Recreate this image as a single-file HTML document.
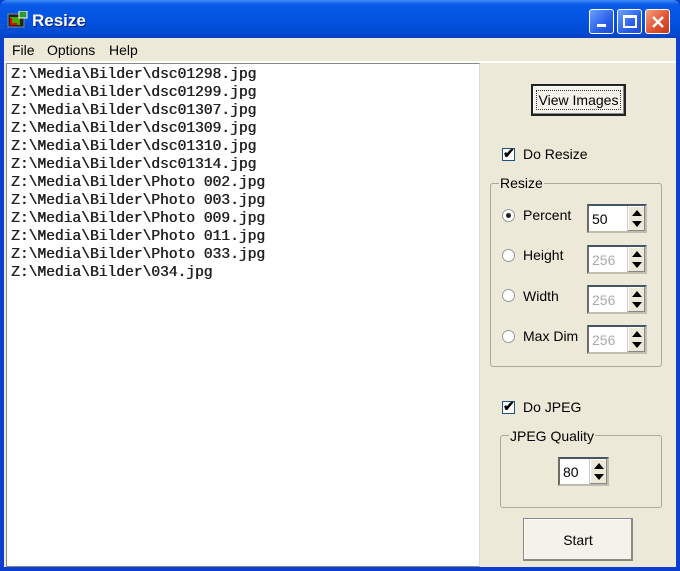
<!DOCTYPE html>
<html><head><style>
*{box-sizing:border-box;margin:0;padding:0}
body{width:680px;height:571px;overflow:hidden;background:#0a3fd0;font-family:"Liberation Sans",sans-serif;font-size:13px;position:relative}
.abs{position:absolute}
.title{left:0;top:0;width:680px;height:38px;background:linear-gradient(#3d8cf5 0,#0a5ae8 12%,#0354e3 50%,#0249d0 90%,#0a3fb8 100%);border-radius:7px 7px 0 0}
.ttext{left:32px;top:11px;color:#fff;font-weight:bold;font-size:17px;text-shadow:1px 1px #0a1f7a}
.tb{top:9px;width:25px;height:25px;border:1px solid #fff;border-radius:3px;background:linear-gradient(135deg,#6aa0ff,#2a60e8 60%,#1e4cd0)}
.client{left:4px;top:38px;width:672px;height:529px;background:#ece9d8}
.chk{width:13px;height:13px;border:1px solid #1c5180;background:#fff;}
.spin{background:#fff;border:2px inset #c0bdb0;border-top-color:#7f9db9}
.btn{background:#f4f2ea;border:1px solid #555;text-align:center;box-shadow:inset -1px -1px #888,inset 1px 1px #fff}
.grp{border:1px solid #aca899;border-radius:3px}
.lab{background:#ece9d8;padding:0 1px}
.radio{width:13px;height:13px;border-radius:50%;background:#fff;border:1px solid #999;}
.arr{width:18px;background:#ece9d8;border-left:1px solid #ccc;box-shadow:inset -1px -1px #888,inset 1px 1px #fff}
</style></head><body>
<div class="abs title"></div>
<svg class="abs" style="left:7px;top:11px" width="22" height="18"><rect x="1" y="3" width="16" height="13" fill="#222" stroke="#888"/><rect x="3" y="6" width="10" height="8" fill="#4a0"/><path d="M4 7v6h6" stroke="#e00" stroke-width="2" fill="none"/><rect x="12" y="0" width="8" height="7" fill="#2c9a2c" stroke="#fff"/></svg>
<div class="abs ttext">Resize</div>
<div class="abs tb" style="left:589px"><div class="abs" style="left:7px;top:14px;width:9px;height:3px;background:#fff"></div></div>
<div class="abs tb" style="left:617px"><div class="abs" style="left:5px;top:5px;width:14px;height:13px;border:2px solid #fff;border-top-width:3px"></div></div>
<div class="abs tb" style="left:645px;background:linear-gradient(135deg,#f0a080,#e05030 60%,#c03818)"><svg class="abs" style="left:5px;top:5px" width="14" height="14"><path d="M2 2L12 12M12 2L2 12" stroke="#fff" stroke-width="2.5"/></svg></div>
<div class="abs client"></div>
<div class="abs" style="left:12px;top:42px;font-size:14px">File</div>
<div class="abs" style="left:47px;top:42px;font-size:14px">Options</div>
<div class="abs" style="left:109px;top:42px;font-size:14px">Help</div>
<div class="abs" style="left:4px;top:61px;width:672px;height:2px;background:#fff"></div>
<div class="abs" style="left:6px;top:63px;width:474px;height:504px;background:#fff;border:1px solid #888;border-right-color:#ddd"></div>
<div class="abs" style="left:11px;top:66px;font-family:'Liberation Mono',monospace;font-size:14.6px;line-height:18px;color:#222;text-shadow:0.5px 0 #222;white-space:pre">Z:\Media\Bilder\dsc01298.jpg
Z:\Media\Bilder\dsc01299.jpg
Z:\Media\Bilder\dsc01307.jpg
Z:\Media\Bilder\dsc01309.jpg
Z:\Media\Bilder\dsc01310.jpg
Z:\Media\Bilder\dsc01314.jpg
Z:\Media\Bilder\Photo 002.jpg
Z:\Media\Bilder\Photo 003.jpg
Z:\Media\Bilder\Photo 009.jpg
Z:\Media\Bilder\Photo 011.jpg
Z:\Media\Bilder\Photo 033.jpg
Z:\Media\Bilder\034.jpg</div>
<div class="abs btn" style="left:531px;top:84px;width:95px;height:32px;border:2px solid #222;padding-top:6px;font-size:14px"><span style="outline:1px dotted #333;padding:1px 2px">View Images</span></div>
<div class="abs chk" style="left:502px;top:148px"></div><div class="abs" style="left:503px;top:145px;font-size:14px;font-weight:bold">✔</div>
<div class="abs" style="left:523px;top:146px;font-size:14px">Do Resize</div>
<div class="abs grp" style="left:490px;top:183px;width:172px;height:184px"></div>
<div class="abs lab" style="left:499px;top:175px;font-size:14px">Resize</div>
<div class="abs radio" style="left:502px;top:209px"></div><div class="abs" style="left:506px;top:213px;width:5px;height:5px;border-radius:50%;background:#222"></div>
<div class="abs" style="left:523px;top:207px;font-size:14px">Percent</div>
<div class="abs radio" style="left:502px;top:249px"></div><div class="abs" style="left:523px;top:247px;font-size:14px">Height</div>
<div class="abs radio" style="left:502px;top:289px"></div><div class="abs" style="left:523px;top:288px;font-size:14px">Width</div>
<div class="abs radio" style="left:502px;top:330px"></div><div class="abs" style="left:523px;top:328px;font-size:14px">Max Dim</div>
<div class="abs spin" style="left:587px;top:204px;width:60px;height:29px"><span class="abs" style="left:3px;top:5px;font-size:14px">50</span><div class="abs arr" style="right:0;top:0;height:25px"><svg width="18" height="25"><path d="M4 10L9 4L14 10ZM4 15L9 21L14 15Z" fill="#000"/></svg></div></div>
<div class="abs spin" style="left:587px;top:245px;width:60px;height:29px"><span class="abs" style="left:3px;top:5px;font-size:14px;color:#aaa">256</span><div class="abs arr" style="right:0;top:0;height:25px"><svg width="18" height="25"><path d="M4 10L9 4L14 10ZM4 15L9 21L14 15Z" fill="#000"/></svg></div></div>
<div class="abs spin" style="left:587px;top:285px;width:60px;height:29px"><span class="abs" style="left:3px;top:5px;font-size:14px;color:#aaa">256</span><div class="abs arr" style="right:0;top:0;height:25px"><svg width="18" height="25"><path d="M4 10L9 4L14 10ZM4 15L9 21L14 15Z" fill="#000"/></svg></div></div>
<div class="abs spin" style="left:587px;top:325px;width:60px;height:29px"><span class="abs" style="left:3px;top:5px;font-size:14px;color:#aaa">256</span><div class="abs arr" style="right:0;top:0;height:25px"><svg width="18" height="25"><path d="M4 10L9 4L14 10ZM4 15L9 21L14 15Z" fill="#000"/></svg></div></div>
<div class="abs chk" style="left:502px;top:401px"></div><div class="abs" style="left:503px;top:398px;font-size:14px;font-weight:bold">✔</div>
<div class="abs" style="left:523px;top:399px;font-size:14px">Do JPEG</div>
<div class="abs grp" style="left:500px;top:435px;width:162px;height:73px"></div>
<div class="abs lab" style="left:509px;top:428px;font-size:14px">JPEG Quality</div>
<div class="abs spin" style="left:558px;top:457px;width:51px;height:29px"><span class="abs" style="left:3px;top:5px;font-size:14px">80</span><div class="abs arr" style="right:0;top:0;height:25px"><svg width="18" height="25"><path d="M4 10L9 4L14 10ZM4 15L9 21L14 15Z" fill="#000"/></svg></div></div>
<div class="abs btn" style="left:523px;top:518px;width:110px;height:43px;padding-top:13px;font-size:14px;border-color:#888">Start</div>
</body></html>
